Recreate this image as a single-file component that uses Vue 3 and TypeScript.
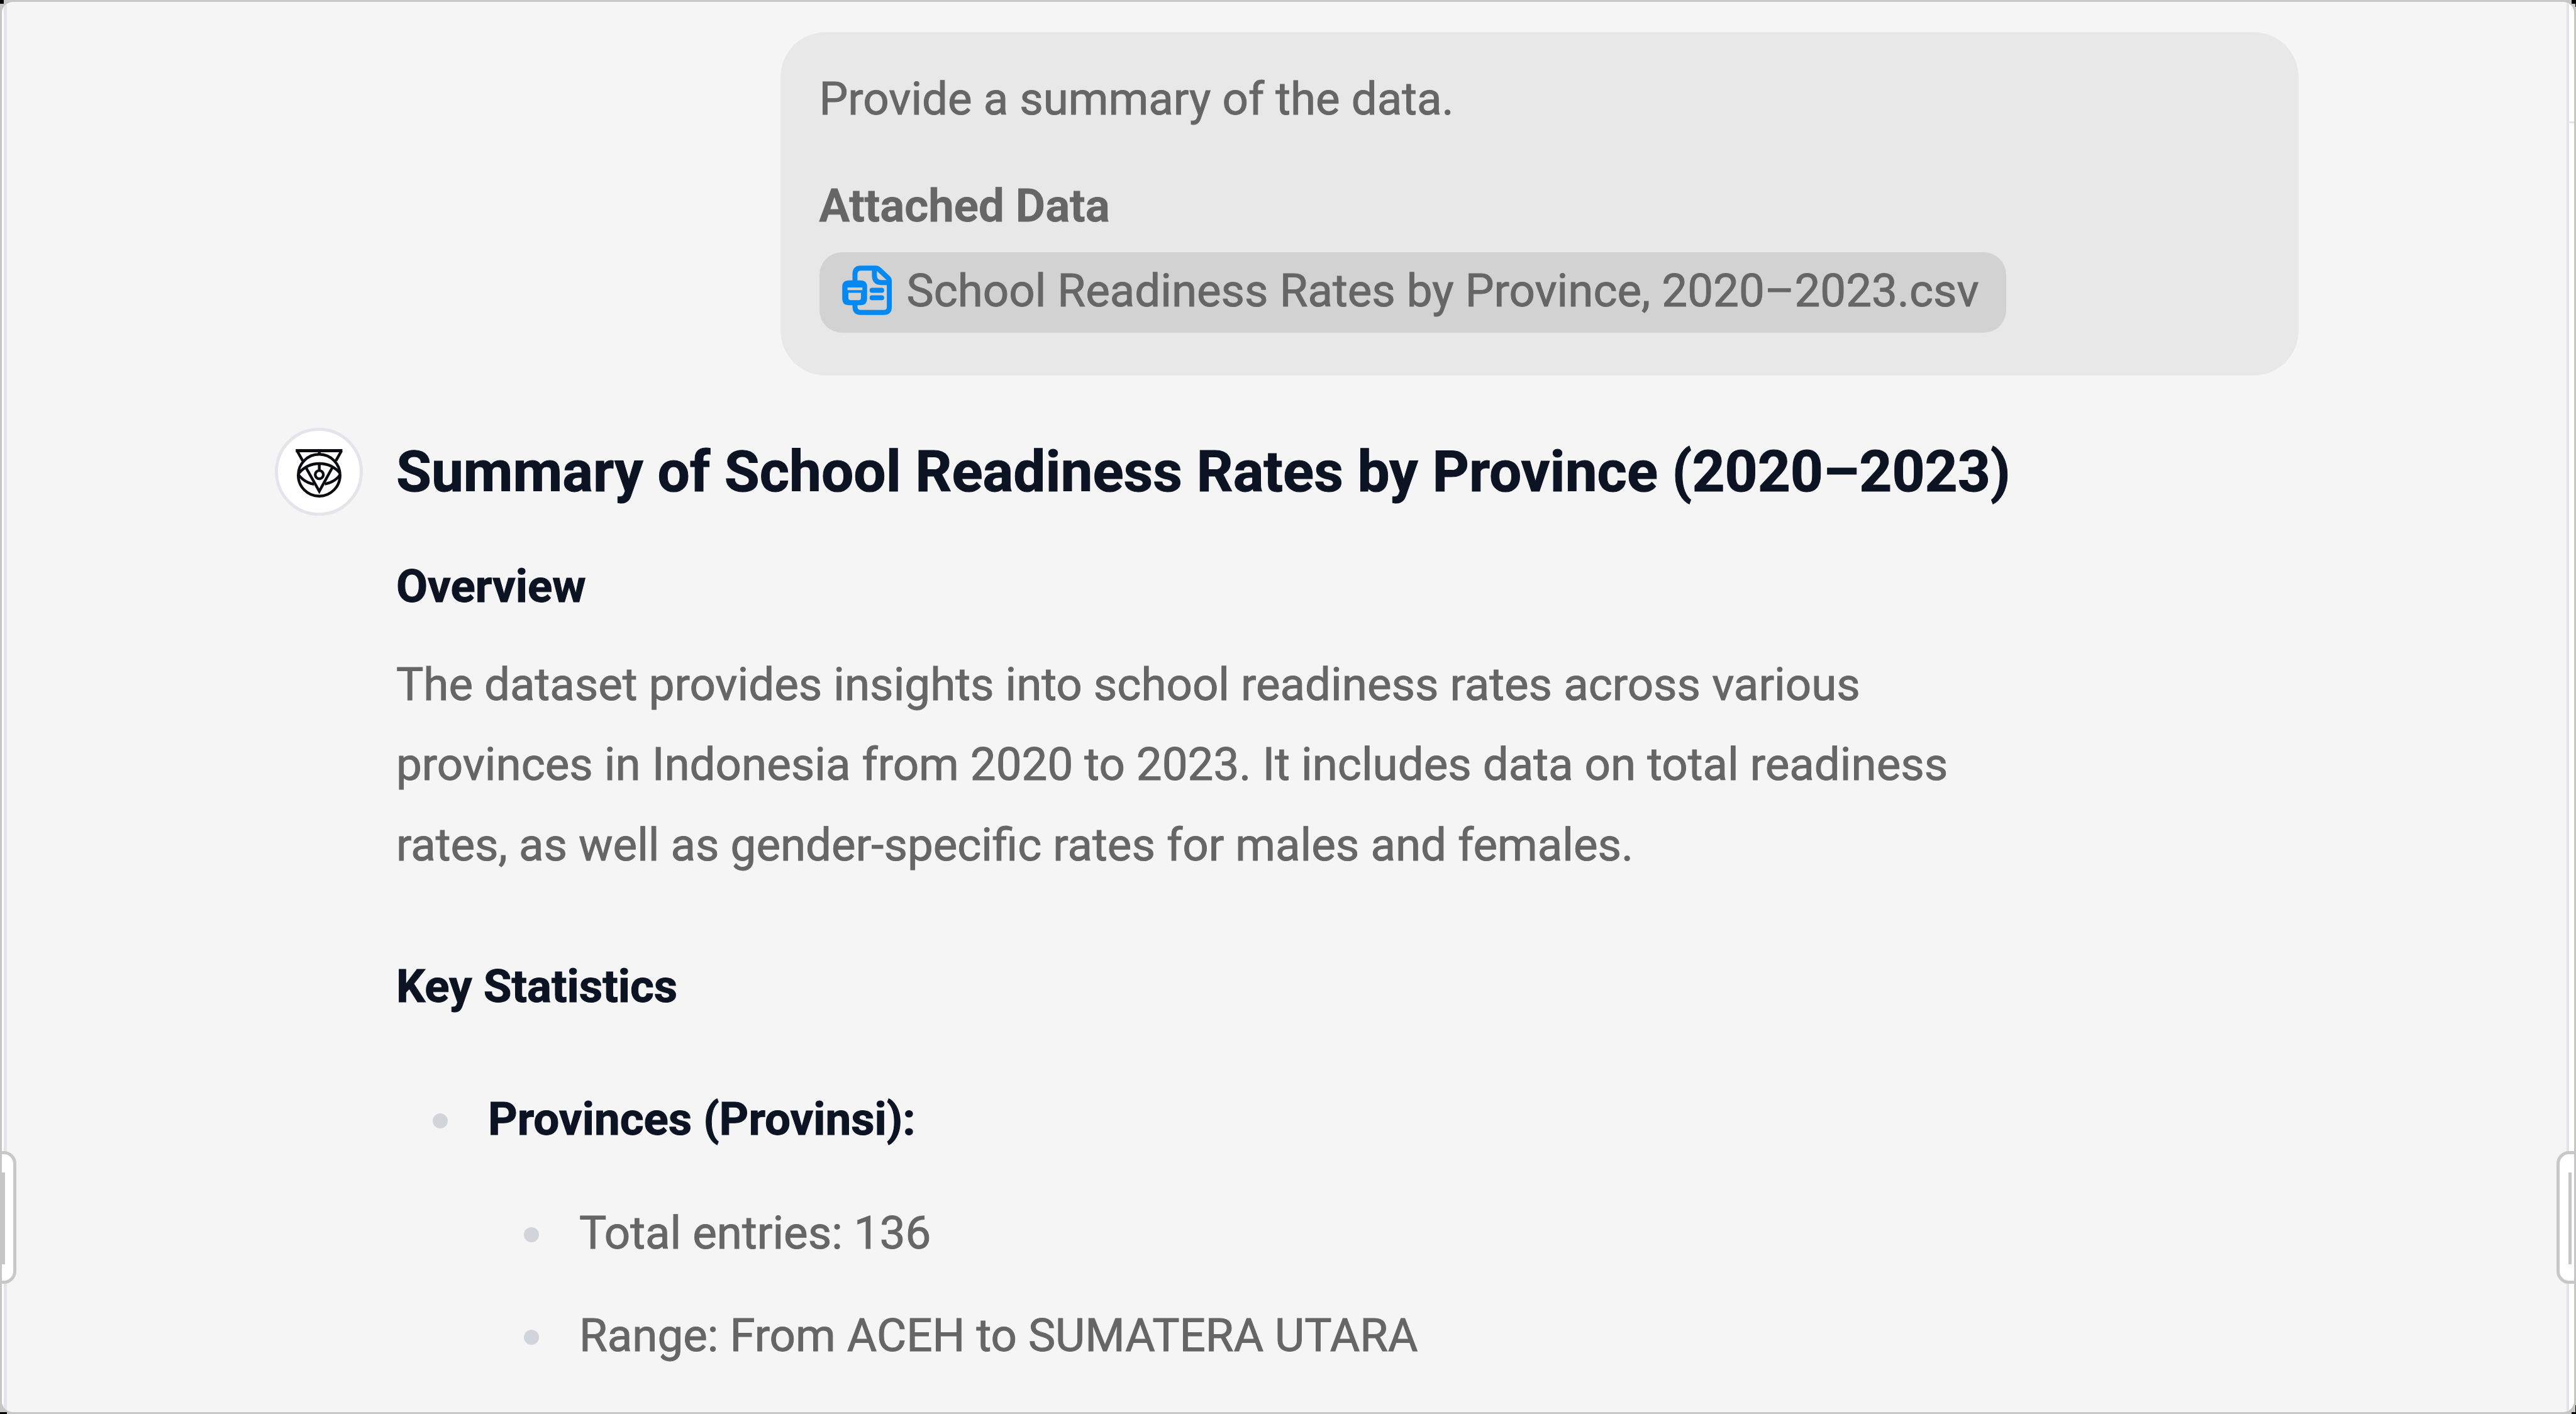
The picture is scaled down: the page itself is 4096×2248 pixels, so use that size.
<script setup lang="ts">
interface StatGroup {
  title: string
  entries: string[]
}

const prompt = 'Provide a summary of the data.'
const fileName = 'School Readiness Rates by Province, 2020–2023.csv'

const overview: string[] = [
  'The dataset provides insights into school readiness rates across various',
  'provinces in Indonesia from 2020 to 2023. It includes data on total readiness',
  'rates, as well as gender-specific rates for males and females.',
]

const stats: StatGroup[] = [
  {
    title: 'Provinces (Provinsi):',
    entries: ['Total entries: 136', 'Range: From ACEH to SUMATERA UTARA'],
  },
]
</script>

<template>
  <div class="window">
    <i class="corner tl"></i>
    <i class="corner tr"></i>
    <i class="corner tr-edge"></i>
    <i class="corner bl"></i>
    <i class="corner br"></i>
    <i class="corner br-edge"></i>

    <div class="panel">
      <aside class="side left"></aside>

      <main class="chat">
        <section class="bubble">
          <p class="line">{{ prompt }}</p>
          <p class="line attached">Attached Data</p>
          <div class="chip">
            <svg class="file-icon" viewBox="187 140 340 340" fill="none" stroke="#0588f0" stroke-width="34" stroke-linecap="round" stroke-linejoin="round">
              <path d="M275 250V200Q275 158 315 158H416Q430 158 440 168L500 224Q510 234 510 248V424Q510 462 472 462H313Q275 462 275 420V405" />
              <path d="M408 162V208Q408 257 455 257H508" />
              <path d="M392 310H458M392 361H458" />
              <path d="M232 242H314Q358 242 358 286V368Q358 412 314 412H232Q188 412 188 368V286Q188 242 232 242ZM224 291V309H326V291ZM230 327V362Q230 378 246 378H300Q316 378 316 362V327Z" fill="#0588f0" fill-rule="evenodd" stroke="none" />
            </svg>
            <span>{{ fileName }}</span>
          </div>
        </section>

        <section class="answer">
          <div class="avatar">
            <svg viewBox="80 78 606 606" fill="none" stroke="#0a0c10" stroke-width="19">
              <path d="M224 236H545" stroke-width="22" />
              <path d="M234 238L272 306M538 238L500 306M386 240V264" />
              <circle cx="385" cy="405" r="144" />
              <path d="M243 394Q300 325 386 325Q472 325 530 392" />
              <path d="M243 402Q285 456 350 467M530 402Q490 454 424 466" />
              <path d="M294 352L386 515L476 352" />
              <path d="M386 325V374" />
              <circle cx="386" cy="401" r="28" />
            </svg>
          </div>

          <article class="prose">
            <h2>Summary of School Readiness Rates by Province (2020–2023)</h2>
            <h3 class="overview-title">Overview</h3>
            <p class="overview">
              <span v-for="row in overview" :key="row">{{ row }}</span>
            </p>
            <h3 class="stats-title">Key Statistics</h3>
            <ul class="stats">
              <li v-for="group in stats" :key="group.title">
                <i class="dot"></i>
                <div>
                  <strong>{{ group.title }}</strong>
                  <ul class="entries">
                    <li v-for="entry in group.entries" :key="entry">
                      <i class="dot"></i>
                      <span>{{ entry }}</span>
                    </li>
                  </ul>
                </div>
              </li>
            </ul>
          </article>
        </section>
      </main>

      <aside class="side right"><i class="rule"></i></aside>

      <div class="handle handle-left"><i></i></div>
      <div class="handle handle-right"><i></i></div>
    </div>
  </div>
</template>

<style>
body {
  margin: 0;
  overflow: hidden;
}
</style>

<style scoped>
.window {
  position: relative;
  box-sizing: border-box;
  width: 4096px;
  height: 2248px;
  padding: 3px;
  background: #c6c6c6;
  font-family: Roboto, "Liberation Sans", sans-serif;
  font-size: 72.7px;
  line-height: 127.2px;
  color: #666;
  -webkit-text-stroke: 1px currentColor;
}

.corner {
  position: absolute;
  background: #000;
}
.tl { left: 0; top: 0; width: 6px; height: 6px; }
.tr { right: 0; top: 0; width: 7px; height: 6px; }
.tr-edge { right: 0; top: 0; width: 1px; height: 11px; }
.bl { left: 0; bottom: 0; width: 11px; height: 3px; }
.br { right: 0; bottom: 0; width: 7px; height: 3px; }
.br-edge { right: 0; bottom: 0; width: 1px; height: 14px; }

.panel {
  position: relative;
  display: flex;
  box-sizing: border-box;
  height: 100%;
  border-radius: 18px;
  background: #f5f5f5;
  overflow: hidden;
}

.side {
  flex: none;
  box-sizing: border-box;
  background: #fff;
}
.side.left {
  width: 8px;
  border-right: 5px solid #e4e5eb;
}
.side.right {
  width: 12px;
  border-left: 4px solid #e2e4ea;
}
.rule {
  display: block;
  height: 3px;
  margin-top: 190px;
  background: #e5e5e5;
}

.chat {
  flex: 1;
  display: flex;
  flex-direction: column;
  box-sizing: border-box;
  padding: 48.4px 426.5px 0 426.3px;
}

p,
h2,
h3,
ul {
  margin: 0;
  padding: 0;
}

.bubble {
  align-self: flex-end;
  box-sizing: border-box;
  width: 2414px;
  height: 545.8px;
  padding: 42.7px 62px 0;
  border-radius: 72px;
  background: #e8e8e8;
}
.line {
  white-space: nowrap;
}
.attached {
  margin-top: 43.1px;
  font-weight: 600;
}
.chip {
  display: flex;
  box-sizing: border-box;
  width: 1887px;
  height: 128px;
  margin-top: 9.8px;
  padding-left: 36px;
  border-radius: 36px;
  background: #d2d2d2;
  line-height: 124px;
  white-space: nowrap;
}
.file-icon {
  flex: none;
  width: 79px;
  height: 79px;
  margin: 21px 24px 0 0;
}

.answer {
  display: flex;
  gap: 52.7px;
  margin-top: 82.8px;
}
.avatar {
  flex: none;
  box-sizing: border-box;
  width: 140px;
  height: 140px;
  border: 5px solid #e3e5ea;
  border-radius: 50%;
  background: #fff;
}
.avatar svg {
  display: block;
  width: 140px;
  height: 140px;
  margin: -5px;
}

.prose {
  white-space: nowrap;
}
h2,
h3,
strong {
  font-weight: 700;
  color: #0c1424;
}
h2 {
  font-size: 90.9px;
  line-height: 140px;
}
h3 {
  font-size: inherit;
}
.overview-title {
  margin-top: 48.7px;
}
.overview {
  margin-top: 29.4px;
}
.overview span {
  display: block;
}
.stats-title {
  margin-top: 98px;
}

ul {
  list-style: none;
}
li {
  display: flex;
}
.dot {
  flex: none;
  width: 24px;
  height: 24px;
  margin: 54px 64px 0 0;
  border-radius: 50%;
  background: #d1d5db;
}
.stats {
  margin-top: 83.7px;
  padding-left: 58px;
}
strong {
  display: block;
}
.entries {
  margin-top: 54.3px;
  padding-left: 57px;
}
.entries li + li {
  margin-top: 36px;
}

.handle {
  position: absolute;
  top: 1827px;
  box-sizing: border-box;
  height: 211px;
  border: 5px solid #c8c8c8;
  background: #fff;
}
.handle i {
  position: absolute;
  top: 29px;
  width: 5px;
  height: 146px;
  background: #c6c6c6;
}
.handle-left {
  left: -5px;
  width: 28px;
  border-radius: 0 20px 20px 0;
}
.handle-left i {
  left: 0;
}
.handle-right {
  right: -5px;
  width: 33px;
  border-radius: 20px 0 0 20px;
}
.handle-right i {
  left: 14px;
}
</style>
